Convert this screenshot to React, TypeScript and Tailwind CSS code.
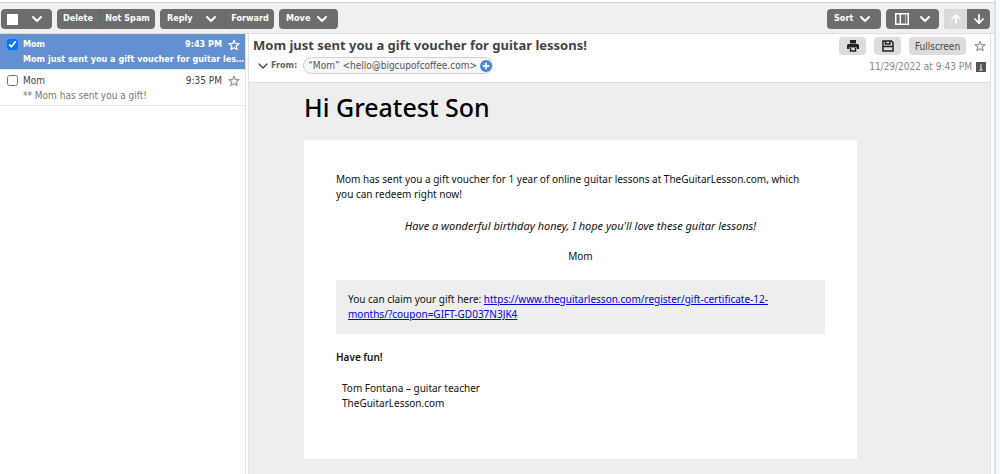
import type { ReactNode } from 'react'
import { useState } from 'react'
import { ArrowDown, ArrowUp, ChevronDown } from 'lucide-react'

const mails = [
  { id: 1, from: 'Mom', time: '9:43 PM', subject: 'Mom just sent you a gift voucher for guitar les…' },
  { id: 2, from: 'Mom', time: '9:35 PM', subject: '** Mom has sent you a gift!' },
]

function Chevron() {
  return <ChevronDown className="h-4 w-4" strokeWidth={3} />
}

function Star({ className }: { className: string }) {
  return (
    <svg viewBox="0 0 12 12" className={`h-3 w-3 ${className}`} fill="none" stroke="currentColor" strokeWidth="1.2">
      <path d="M6 1.2 7.3 4.4 11 4.7 8.2 7 9.1 10.6 6 8.7 2.9 10.6 3.8 7 1 4.7 4.7 4.4Z" strokeLinejoin="round" />
    </svg>
  )
}

function Group({ children }: { children: ReactNode }) {
  return (
    <div className="flex h-5 items-stretch overflow-hidden rounded bg-[#6d6d6d] text-[9px] font-bold text-white">
      {children}
    </div>
  )
}

function SelectBox({ checked, onChange, label }: { checked: boolean; onChange: () => void; label: string }) {
  return (
    <input
      type="checkbox"
      aria-label={label}
      checked={checked}
      onChange={onChange}
      className="h-[11px] w-[11px] shrink-0 accent-[#0075ff]"
    />
  )
}

export default function App() {
  const [checked, setChecked] = useState<number[]>([1])

  const toggle = (id: number) => {
    setChecked((prev) => (prev.includes(id) ? prev.filter((x) => x !== id) : [...prev, id]))
  }

  return (
    <div className="flex min-h-screen bg-[#f5f9fc] pr-1 font-['DejaVu_Sans_Condensed','DejaVu_Sans',sans-serif] text-[10px] text-[#444]">
      <div className="flex min-w-0 flex-1 flex-col border-r-2 border-[#d9e2e8] bg-white pt-0.5">
        {/* toolbar */}
        <div className="flex h-8 items-center justify-between border-y border-t-[#d4d4d4] border-b-[#dcdcdc] bg-[#f0f0f0] pt-0.5 pr-1 pl-px">
          <div className="flex gap-[5px]">
            <Group>
              <button aria-label="Select messages" className="flex w-[51px] items-center gap-[11px] pl-1.5">
                <span className="h-[11px] w-[11px] bg-white" />
                <Chevron />
              </button>
            </Group>
            <Group>
              <button className="w-[43px] border-r border-[#666]">Delete</button>
              <button className="w-[55px]">Not Spam</button>
            </Group>
            <Group>
              <button className="flex w-[66px] items-center justify-between border-r border-[#666] pr-1.5 pl-[7px]">
                Reply <Chevron />
              </button>
              <button className="w-[48px]">Forward</button>
            </Group>
            <Group>
              <button className="flex w-[59px] items-center justify-between pr-2 pl-[7px]">
                Move <Chevron />
              </button>
            </Group>
          </div>
          <div className="flex gap-[5px]">
            <Group>
              <button className="flex w-[54px] items-center justify-between pr-2 pl-[7px]">
                Sort <Chevron />
              </button>
            </Group>
            <Group>
              <button aria-label="Layout" className="flex w-[53px] items-center justify-between pr-1.5 pl-[9px]">
                <svg viewBox="0 0 14 12" className="h-3 w-3.5" fill="none" stroke="currentColor">
                  <path d="M.75.75h12.5v10.5H.75zM5.250 .75v10.500" strokeWidth="1.500" />
                  <path d="M10.500 2v8" opacity=".5" />
                </svg>
                <Chevron />
              </button>
            </Group>
            <Group>
              <button aria-label="Previous message" disabled className="flex w-[23px] items-center justify-center bg-[#dadada]">
                <ArrowUp className="h-3.5 w-3.5" strokeWidth={3} />
              </button>
              <button aria-label="Next message" className="flex w-[23px] items-center justify-center">
                <ArrowDown className="h-3.5 w-3.5" strokeWidth={3} />
              </button>
            </Group>
          </div>
        </div>

        <div className="flex flex-1">
          {/* message list */}
          <div className="w-[246px] shrink-0 border-r border-[#e2e2e2]">
            {mails.map((mail) => {
              const on = checked.includes(mail.id)
              return (
                <div
                  key={mail.id}
                  className={`flex h-9 gap-[5px] border-b pt-[3px] pr-[5px] pl-[7px] ${
                    on ? 'border-[#e8eef6] bg-[#6390d0] font-bold text-white' : 'border-[#e6e6e6]'
                  }`}
                >
                  <div className="pt-0.5">
                    <SelectBox checked={on} onChange={() => toggle(mail.id)} label={`Select ${mail.subject}`} />
                  </div>
                  <div className="min-w-0 flex-1">
                    <div className={`flex h-[15px] items-center ${on ? 'text-[9px]' : ''}`}>
                      <span className="flex-1">{mail.from}</span>
                      <span>{mail.time}</span>
                      <button aria-label="Star" className="ml-1.5">
                        <Star className={on ? 'text-white' : 'text-[#999]'} />
                      </button>
                    </div>
                    <div className={`leading-[15px] whitespace-nowrap ${on ? 'text-[9px]' : 'text-[#777]'}`}>{mail.subject}</div>
                  </div>
                </div>
              )
            })}
          </div>

          {/* opened message */}
          <div className="mr-[3px] ml-0.5 flex min-w-0 flex-1 flex-col border-x border-[#e2e2e2]">
            <div className="flex h-[49px] justify-between border-b border-[#dcdcdc] pt-[3px] pr-1 pl-1">
              <div>
                <h2 className="font-['Noto_Sans',sans-serif] text-[13px] leading-4 font-bold text-[#444]">
                  Mom just sent you a gift voucher for guitar lessons!
                </h2>
                <div className="mt-1 flex items-center pl-0.5">
                  <button aria-label="Show details" className="flex items-center">
                    <ChevronDown className="h-4 w-4" strokeWidth={2} />
                  </button>
                  <span className="text-[9px] font-bold text-[#666]">From:</span>
                  <span className="ml-1.5 flex h-[17px] items-center gap-[3px] rounded-full border border-[#d0d0d0] bg-[#f8f8f8] pl-1 text-[#555]">
                    “Mom” &lt;hello@bigcupofcoffee.com&gt;
                    <button aria-label="Add contact">
                      <svg viewBox="0 0 12 12" className="h-3 w-3">
                        <circle cx="6" cy="6" r="6" fill="#4a86cf" />
                        <path d="M6 2.8v6.4M2.8 6h6.4" stroke="#fff" strokeWidth="1.8" />
                      </svg>
                    </button>
                  </span>
                </div>
              </div>
              <div className="flex flex-col items-end gap-1">
                <div className="flex items-center gap-2">
                  <button aria-label="Print" className="flex h-[18px] w-[27px] items-center justify-center rounded bg-[#dcdcdc] text-[#222]">
                    <svg viewBox="0 0 12 12" className="h-3 w-3" fill="currentColor">
                      <path d="M3 0h6v3.5H3zM1.5 4h9A1.5 1.5 0 0 1 12 5.5V9h-2V7.500H2V9H0V5.500A1.500 1.500 0 0 1 1.500 4z" />
                      <path d="M3.500 8v3h5V8" fill="none" stroke="currentColor" strokeWidth="1.500" />
                    </svg>
                  </button>
                  <button aria-label="Save" className="flex h-[18px] w-[27px] items-center justify-center rounded bg-[#dcdcdc] text-[#222]">
                    <svg viewBox="0 0 12 12" className="h-3 w-3" fill="none" stroke="currentColor" strokeWidth="1.500">
                      <path d="M1 1h8.500L11 2.500V11H1zM3.500 1v3h4.500V1M1 6.500h10" />
                    </svg>
                  </button>
                  <button className="h-[18px] w-[57px] rounded bg-[#dcdcdc] text-[#444]">Fullscreen</button>
                  <button aria-label="Star">
                    <Star className="text-[#999]" />
                  </button>
                </div>
                <div className="flex items-center gap-1 text-[#888]">
                  11/29/2022 at 9:43 PM
                  <svg viewBox="0 0 10 10" className="h-2.5 w-2.5">
                    <path d="M0 0h10v10H0z" fill="#555" />
                    <path d="M5 2v1.500M4 4.500h1V8M3.500 8h3" stroke="#fff" fill="none" />
                  </svg>
                </div>
              </div>
            </div>

            <div className="flex-1 bg-[#eee] pt-[5px] pr-4 pb-3.5 pl-[55px] font-['Noto_Sans',sans-serif] text-[10px] leading-[15px] text-[#111]">
              <h1 className="text-[25px] leading-[38px] font-medium text-black">Hi Greatest Son</h1>
              <div className="mt-[14px] max-w-[553px] bg-white px-8 pt-8 pb-12">
                <p className="pr-4">
                  Mom has sent you a gift voucher for 1 year of online guitar lessons at TheGuitarLesson.com, which you can
                  redeem right now!
                </p>
                <p className="mt-4 text-center text-[11px] italic">
                  Have a wonderful birthday honey, I hope you'll love these guitar lessons!
                </p>
                <p className="mt-4 text-center">Mom</p>
                <p className="mt-4 bg-[#eee] py-3 pr-8 pl-3">
                  You can claim your gift here:{' '}
                  <a href="#claim" className="text-[#00e] underline">
                    https://www.theguitarlesson.com/register/gift-certificate-12-months/?coupon=GIFT-GD037N3JK4
                  </a>
                </p>
                <p className="mt-4 font-semibold">Have fun!</p>
                <p className="mt-4 pl-1.5">
                  Tom Fontana – guitar teacher
                  <br />
                  TheGuitarLesson.com
                </p>
              </div>
            </div>
          </div>
        </div>
      </div>
    </div>
  )
}
